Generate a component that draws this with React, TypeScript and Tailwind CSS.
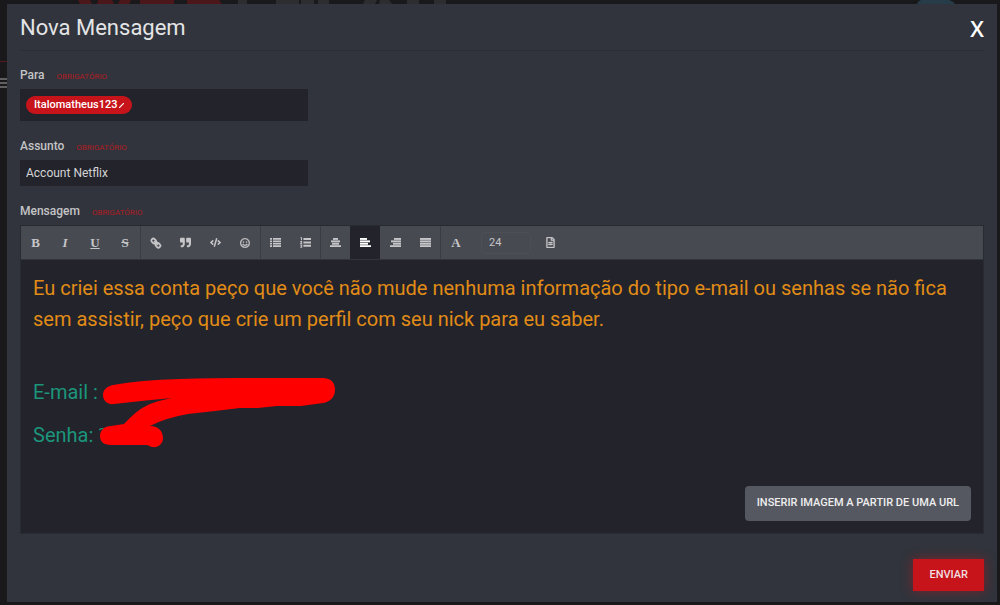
import { useState } from "react";
import type { ReactNode } from "react";
import { FaQuoteRight, FaCode, FaRegSmile, FaRegFileAlt } from "react-icons/fa";

type Tool = { label: string; icon: ReactNode };

function Bars({ rows }: { rows: [number, number][] }) {
  return (
    <svg viewBox="0 0 11 9" className="h-[9px] w-[11px]" fill="currentColor">
      {rows.map(([x, w], i) => (
        <rect key={i} x={x} y={i * 2.4} width={w} height={1.9} />
      ))}
    </svg>
  );
}

function BulletList() {
  return (
    <svg viewBox="0 0 11 9" className="h-[9px] w-[11px]" fill="currentColor">
      {[0, 2.4, 4.8, 7.2].map((y) => (
        <path key={y} d={`M0 ${y}h2v1.7h-2zM3 ${y}h8v1.7h-8z`} />
      ))}
    </svg>
  );
}

function NumberList() {
  return (
    <svg viewBox="0 0 11 11" className="h-[11px] w-[11px]" fill="currentColor">
      <path d="M3.4 1h7.6v2H3.4zM3.4 4.4h7.6v2H3.4zM3.4 7.8h7.6v2H3.4z" />
      <path d="M.5.3H2v3H1V1.2H.5zM.2 4h2v1.2l-.9.9h.9V7h-2v-.9l1-1.1h-1zM.2 7.6h2v3.2h-2V10h1v-.4H.6v-.8h.6v-.4h-1z" />
    </svg>
  );
}

function Chain() {
  return (
    <svg viewBox="0 0 12 12" className="h-3 w-3" fill="none" stroke="currentColor" strokeWidth="1.8">
      <rect x="1.4" y="2.2" width="5" height="3.8" rx="1.8" transform="rotate(45 3.9 3.9)" />
      <rect x="5.6" y="6.4" width="5" height="3.8" rx="1.8" transform="rotate(45 8.1 8.1)" />
      <path d="M4.6 4.6 7.4 7.4" strokeLinecap="round" />
    </svg>
  );
}

const letter = "font-['Liberation_Serif',serif] text-[13px] leading-4 font-bold";

const groups: Tool[][] = [
  [
    { label: "Negrito", icon: <span className={letter}>B</span> },
    { label: "Itálico", icon: <span className={`${letter} italic`}>I</span> },
    { label: "Sublinhado", icon: <span className={`${letter} underline`}>U</span> },
    { label: "Tachado", icon: <span className={`${letter} line-through`}>S</span> },
  ],
  [
    { label: "Link", icon: <Chain /> },
    { label: "Citação", icon: <FaQuoteRight className="text-[11px]" /> },
    { label: "Código", icon: <FaCode className="text-[11px]" /> },
    { label: "Emoticons", icon: <FaRegSmile stroke="currentColor" strokeWidth="20" /> },
  ],
  [
    { label: "Lista", icon: <BulletList /> },
    { label: "Lista numerada", icon: <NumberList /> },
  ],
  [
    { label: "Centralizar", icon: <Bars rows={[[3, 5], [1, 9], [2, 7], [0, 11]]} /> },
    { label: "Alinhar à esquerda", icon: <Bars rows={[[0, 7], [0, 10], [0, 8], [0, 11]]} /> },
    { label: "Alinhar à direita", icon: <Bars rows={[[4, 7], [1, 10], [3, 8], [0, 11]]} /> },
    { label: "Justificar", icon: <Bars rows={[[0, 11], [0, 11], [0, 11], [0, 11]]} /> },
  ],
];

function FieldLabel({ htmlFor, id, children }: { htmlFor?: string; id?: string; children: ReactNode }) {
  return (
    <label htmlFor={htmlFor} id={id} className="flex items-baseline gap-3 text-[12px] leading-5 font-medium text-[#c4c4c6]">
      {children}
      <span className="text-[8px] font-normal text-[#b01c24]">OBRIGATÓRIO</span>
    </label>
  );
}

function Backdrop() {
  return (
    <svg className="absolute top-0 left-0 h-24 w-full" aria-hidden="true">
      <path d="M78 0h12l2 4H80zM98 0h14l2 4H97zM120 0h11l-2 4h-11zM140 0h34v4h-34zM187 0h32l3 4h-35z" fill="#4b171b" />
      <path d="M238 0h9v4h-9zM276 0h23v4h-23zM301 0h13v4h-13zM318 0h11v4h-11zM365 0h12l-2 4h-12zM380 0h9l3 4h-13zM407 0h12v4h-12zM434 0h12v4h-12z" fill="#2c2d2e" />
      <path d="M917 4q1-3 4-4h28q4 1 6 4z" fill="#263d49" />
      <path d="M0 61h7v1H0z" fill="#551a1e" />
      <path d="M0 78h7v2H0zM0 82h7v2H0zM0 86h7v2H0z" fill="#606063" />
    </svg>
  );
}

export default function App() {
  const [subject, setSubject] = useState("Account Netflix");
  const [size, setSize] = useState("24");
  const [active, setActive] = useState("Alinhar à esquerda");

  return (
    <div className="relative flex min-h-screen flex-col bg-[#19191b] pt-1 pr-[3px] pb-[3px] pl-[7px] font-['Roboto',sans-serif]">
      <Backdrop />
      <section role="dialog" aria-labelledby="title" className="relative flex flex-1 flex-col bg-[#31343c] px-[13px]">
        <header className="flex h-[47px] items-center justify-between border-b border-[#2b2d35] pt-0.5">
          <h1 id="title" className="text-[22px] leading-8 text-[#e4e4e6]">Nova Mensagem</h1>
          <button type="button" aria-label="Fechar" className="font-['Open_Sans',sans-serif] text-[22px] leading-8 font-semibold text-white">
            X
          </button>
        </header>

        <form className="flex flex-1 flex-col pt-[14px]" onSubmit={(e) => e.preventDefault()}>
          <FieldLabel id="to-label">Para</FieldLabel>
          <div aria-labelledby="to-label" role="group" className="mt-0.5 flex h-8 w-72 items-center bg-[#22232b] px-1.5">
            <button type="button" className="flex h-[18px] items-center gap-0.5 rounded-full bg-[#c7141b] px-2 text-[11px] font-medium text-white">
              Italomatheus123
              <svg viewBox="0 0 5 5" className="h-[5px] w-[5px]" stroke="currentColor" strokeWidth="1.2">
                <path d="M0 5 5 0" />
              </svg>
            </button>
          </div>

          <div className="mt-[15px]">
            <FieldLabel htmlFor="subject">Assunto</FieldLabel>
            <input
              id="subject"
              value={subject}
              onChange={(e) => setSubject(e.target.value)}
              className="mt-0.5 block h-[26px] w-72 bg-[#22232b] px-1.5 text-[12px] text-[#d4d4d6] outline-none"
            />
          </div>

          <div className="mt-[15px] flex flex-1 flex-col">
            <FieldLabel id="message-label">Mensagem</FieldLabel>
            <div className="mt-0.5 flex flex-1 flex-col border border-[#292b33] bg-[#22232b]">
              <div role="toolbar" aria-label="Formatação" className="flex h-[34px] items-stretch border-b border-[#33353c] bg-[#484a51] text-[10px] text-[#c6c6c9]">
                {groups.map((group, i) => (
                  <div key={i} className="flex border-r border-[#3a3c43]">
                    {group.map(({ label, icon }) => (
                      <button
                        key={label}
                        type="button"
                        aria-label={label}
                        aria-pressed={active === label}
                        onClick={() => setActive(label)}
                        className="flex w-[30px] items-center justify-center first:w-[29px] aria-pressed:bg-[#22232b] aria-pressed:text-white"
                      >
                        {icon}
                      </button>
                    ))}
                  </div>
                ))}
                <button type="button" aria-label="Cor da fonte" className="flex w-[30px] items-center justify-center">
                  <span className={letter}>A</span>
                </button>
                <input
                  aria-label="Tamanho da fonte"
                  value={size}
                  onChange={(e) => setSize(e.target.value)}
                  className="mx-2.5 h-[22px] w-[50px] self-center rounded-sm border border-[#4d4f56] bg-transparent px-[7px] text-[11px] outline-none"
                />
                <button type="button" aria-label="Fonte do texto" className="flex w-[18px] items-center justify-center">
                  <FaRegFileAlt className="text-[11px]" stroke="currentColor" strokeWidth="16" />
                </button>
              </div>

              <div className="relative flex-1 px-3 pt-[13px] text-[20px] leading-[31px]" aria-labelledby="message-label">
                <p className="text-[#e18c17]">
                  Eu criei essa conta peço que você não mude nenhuma informação do tipo e-mail ou senhas se não fica
                  <br />
                  sem assistir, peço que crie um perfil com seu nick para eu saber.
                </p>
                <p className="mt-[42px] text-[#1c957b]">E-mail :</p>
                <p className="mt-3 text-[#1c957b]">Senha:</p>
                <svg viewBox="99 374 240 76" className="absolute top-[115px] left-[78px] h-[76px] w-[240px]" aria-hidden="true">
                  <path d="M99 429q2-2 5-1" stroke="#1c957b" strokeWidth="1.2" fill="none" />
                  <path
                    d="M113 384 Q140 379 180 378 Q215 377 240 377 H322 C332 377 335 382 335 389 C335 396 330 401 323 402 L301 405 H277 L258 407 H240 L215 410 L188 413 Q165 417 150 425 C159 425 163 431 163 437 C163 443 158 447 152 446 L147 444 H111 C103 444 100 440 100 435 C100 429 105 425 111 425 L124 423 Q137 409 146 405 Q155 400 172 397 Q140 400 114 403 C107 404 103 399 103 394 C103 388 108 385 113 384Z"
                    fill="#ff0000"
                  />
                </svg>
              </div>

              <button type="button" className="mr-3 mb-3 h-[35px] self-end rounded-sm bg-[#565861] px-3 text-[11px] font-medium text-[#eeeeef]">
                INSERIR IMAGEM A PARTIR DE UMA URL
              </button>
            </div>
          </div>

          <button type="submit" className="mt-[25px] mb-[11px] h-8 self-end bg-[#c7141b] px-4 text-[11px] font-medium text-[#f1dfe0] shadow-[0_0_12px_rgba(199,20,27,0.5)]">
            ENVIAR
          </button>
        </form>
      </section>
    </div>
  );
}
